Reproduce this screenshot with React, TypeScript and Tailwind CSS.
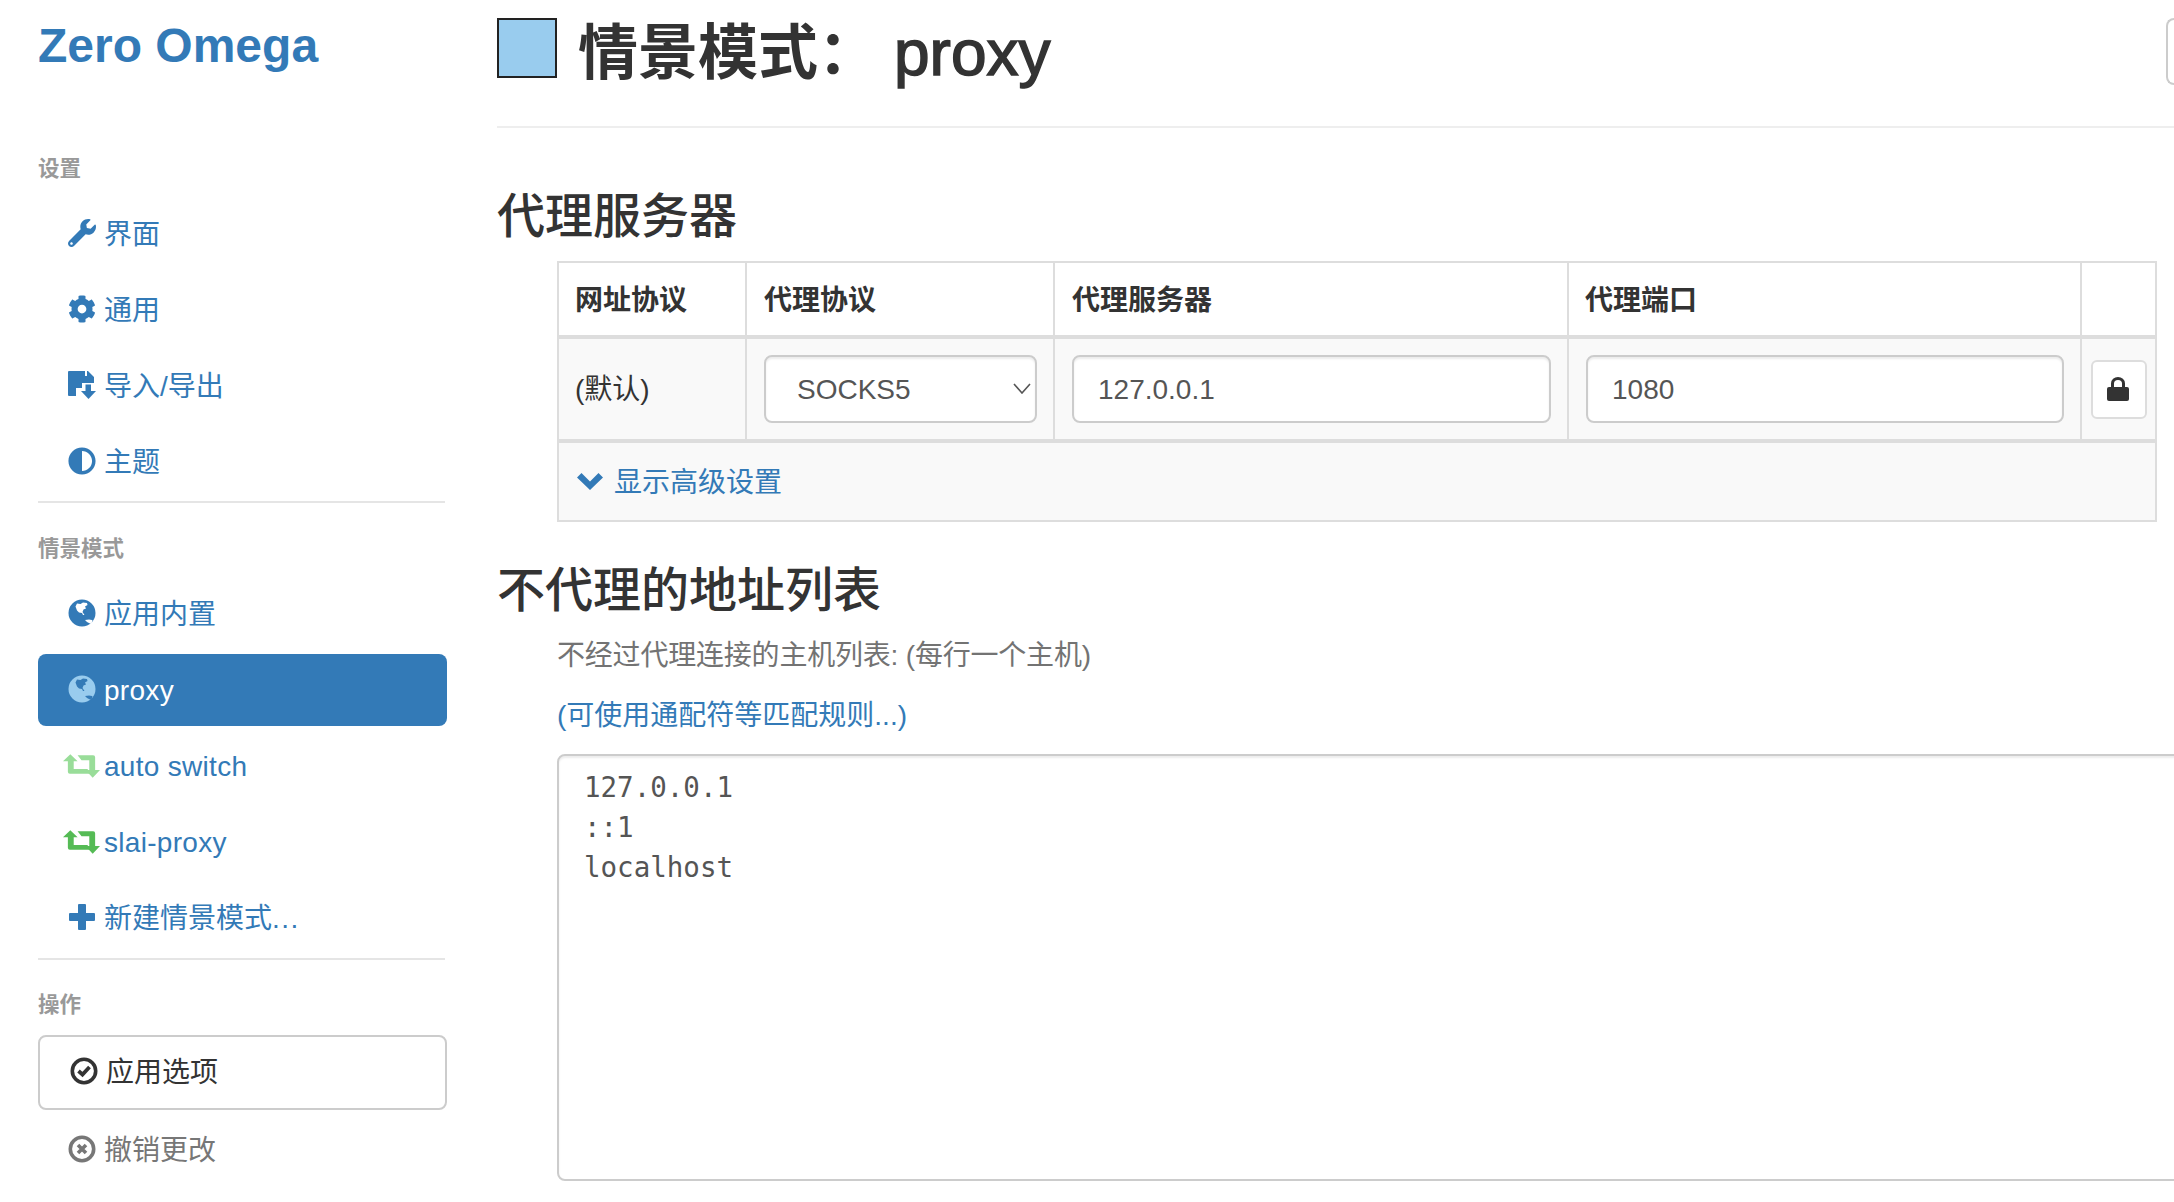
import React from "react";
import { FaWrench, FaCog, FaAdjust } from "react-icons/fa";

const FONT = "font-['Liberation_Sans','Noto_Sans_CJK_SC',sans-serif]";

function Floppy() {
  return (
    <svg viewBox="0 0 28 28" className="h-[28px] w-[28px] fill-current">
      <path d="M1 0H17V5H19V0H20L26 6V12H14V17H8V25H1Q0 25 0 24V1Q0 0 1 0Z" />
      <path d="M17.5 13.5H23V20H28L20.5 28L13 20H17.5Z" />
    </svg>
  );
}

function Globe({ color }: { color?: string }) {
  return (
    <svg viewBox="0 0 28 28" className={`h-[28px] w-[28px] ${color ?? ""}`} fill="currentColor">
      <path
        fillRule="evenodd"
        d="M14 .5a13.5 13.5 0 1 1 0 27a13.5 13.5 0 0 1 0-27ZM9 4.5L7.5 7.5L9 11.5L11 13.5L14 14L15 16L16.5 16L14.5 13L15.5 10.5L18 9.5L17 7.5L19.5 6L19 4L15 3.5L12.5 5ZM17 21L19 23L22 24.5L25 22.5L24 21L21 20.5Z"
      />
    </svg>
  );
}

function Retweet({ color }: { color: string }) {
  return (
    <svg viewBox="0 0 38 24" className={`h-[24px] w-[37px] shrink-0 ${color}`} fill="currentColor">
      <path d="M7.5 0L15 7H11V15H25L29 20H7Q5 20 5 18V7H0Z" />
      <path d="M15 1H31Q33 1 33 3V16H38L30.5 24L23 16H27V6H19Z" />
    </svg>
  );
}

function Plus() {
  return (
    <svg viewBox="0 0 26 26" className="h-[26px] w-[26px] fill-current">
      <path d="M9 1Q9 0 10 0H16Q17 0 17 1V9H25Q26 9 26 10V16Q26 17 25 17H17V25Q17 26 16 26H10Q9 26 9 25V17H1Q0 17 0 16V10Q0 9 1 9H9Z" />
    </svg>
  );
}

function Chevron() {
  return (
    <svg viewBox="0 0 26 18" className="mr-[11px] h-[18px] w-[26px] shrink-0 -translate-y-[2px] fill-current">
      <path d="M0 5.5L4.5 1L13 9.5L21.5 1L26 5.5L13 18Z" />
    </svg>
  );
}

function OkCircle() {
  return (
    <svg viewBox="0 0 28 28" className="h-[28px] w-[28px]" fill="none" stroke="currentColor">
      <circle cx="14" cy="14" r="11.7" strokeWidth="3.6" />
      <path d="M8.5 14L12.5 17.5L19.5 10" strokeWidth="3.8" />
    </svg>
  );
}

function RemoveCircle() {
  return (
    <svg viewBox="0 0 28 28" className="h-[28px] w-[28px]" fill="none" stroke="currentColor">
      <circle cx="14" cy="14" r="11.7" strokeWidth="3.6" />
      <path d="M10 10L18 18M18 10L10 18" strokeWidth="3.6" />
    </svg>
  );
}

function Lock() {
  return (
    <svg viewBox="0 0 22 24" className="h-[24px] w-[22px] fill-[#333]">
      <rect x="0" y="10" width="22" height="14" rx="2" />
      <path d="M5.5 11V6.5a5.5 5 0 0 1 11 0V11" fill="none" stroke="#333" strokeWidth="3" />
    </svg>
  );
}

function NavRow({
  icon,
  text,
  active,
  wide,
  latin,
}: {
  icon: React.ReactNode;
  text: React.ReactNode;
  active?: boolean;
  wide?: boolean;
  latin?: boolean;
}) {
  return (
    <a
      className={`flex h-[72px] items-center rounded-[8px] pl-[30px] pt-[2px] text-[28px] ${
        latin ? "tracking-[0.3px]" : ""
      } ${active ? "bg-[#337ab7] text-white" : "text-[#337ab7]"}`}
    >
      <span
        className={
          wide
            ? "-ml-[5px] -mt-[2px] mr-[4px] flex w-[37px] items-center"
            : "-mt-[4px] mr-[8px] flex w-[28px] items-center justify-center"
        }
      >
        {icon}
      </span>
      {text}
    </a>
  );
}

function SectionLabel({ children, className }: { children: React.ReactNode; className: string }) {
  return <div className={`h-[24px] text-[21.5px] font-bold leading-[26px] text-[#999] ${className}`}>{children}</div>;
}

function Sidebar() {
  return (
    <aside className="ml-[38px] w-[409px] shrink-0">
      <div className="pt-[17px] text-[48px] font-bold leading-[58px] text-[#337ab7]">Zero Omega</div>
      <SectionLabel className="mt-[81px]">设置</SectionLabel>
      <nav className="mt-[18px] flex flex-col gap-[4px]">
        <NavRow icon={<FaWrench size={28} />} text="界面" />
        <NavRow icon={<FaCog size={28} />} text="通用" />
        <NavRow icon={<Floppy />} text="导入/导出" />
        <NavRow icon={<FaAdjust size={28} />} text="主题" />
      </nav>
      <div className="mt-[3px] h-[2px] w-[407px] bg-[#e5e5e5]" />
      <SectionLabel className="mt-[33px]">情景模式</SectionLabel>
      <nav className="mt-[18px] flex flex-col gap-[4px]">
        <NavRow icon={<Globe />} text="应用内置" />
        <NavRow icon={<Globe color="text-[#99ccee]" />} text="proxy" active latin />
        <NavRow icon={<Retweet color="text-[#99dd99]" />} text="auto switch" wide latin />
        <NavRow icon={<Retweet color="text-[#55bb55]" />} text="slai-proxy" wide latin />
        <NavRow
          icon={<Plus />}
          text={
            <>
              新建情景模式<span className="tracking-[1.5px]">...</span>
            </>
          }
        />
      </nav>
      <div className="mt-[4px] h-[2px] w-[407px] bg-[#e5e5e5]" />
      <SectionLabel className="mt-[32px]">操作</SectionLabel>
      <button className="mt-[19px] flex h-[75px] w-full items-center rounded-[8px] border-2 border-[#ccc] bg-white pl-[30px] text-[28px] text-[#333]">
        <span className="-mt-[4px] mr-[8px] flex w-[28px]">
          <OkCircle />
        </span>
        应用选项
      </button>
      <div className="mt-[4px] flex h-[72px] items-center pl-[30px] pt-[2px] text-[28px] text-[#777]">
        <span className="-mt-[4px] mr-[8px] flex w-[28px]">
          <RemoveCircle />
        </span>
        撤销更改
      </div>
    </aside>
  );
}

const thClass = "h-[76px] border-b-4 border-r-2 border-[#ddd] pl-[17px] pr-[16px] pt-[3px] text-left text-[28px] font-bold text-[#333]";
const tdClass = "h-[104px] border-b-4 border-r-2 border-[#ddd] bg-[#f9f9f9] pl-[17px] pr-[16px] text-[28px] text-[#333]";
const inputClass =
  "h-[68px] w-full rounded-[8px] border-2 border-[#ccc] bg-white pl-[24px] pt-[1px] text-[28px] text-[#555] shadow-[inset_0_2px_2px_rgba(0,0,0,0.075)] outline-none";

function ProxyTable() {
  return (
    <table className="ml-[60px] mt-[15px] w-[1600px] table-fixed border-separate border-spacing-0 border-2 border-[#ddd]">
      <colgroup>
        <col className="w-[188px]" />
        <col className="w-[308px]" />
        <col className="w-[514px]" />
        <col className="w-[513px]" />
        <col className="w-[73px]" />
      </colgroup>
      <thead>
        <tr>
          <th className={`${thClass} !pl-[16px]`}>网址协议</th>
          <th className={thClass}>代理协议</th>
          <th className={thClass}>代理服务器</th>
          <th className={`${thClass} !pl-[16px]`}>代理端口</th>
          <th className="h-[76px] border-b-4 border-[#ddd]" />
        </tr>
      </thead>
      <tbody>
        <tr>
          <td className={`${tdClass} !pl-[16px] pt-[2px]`}>(默认)</td>
          <td className={tdClass}>
            <div className="relative">
              <select className={`${inputClass} appearance-none !pl-[31px]`} defaultValue="SOCKS5">
                <option>SOCKS5</option>
              </select>
              <svg
                viewBox="0 0 18 11"
                className="pointer-events-none absolute right-[6px] top-[28px] h-[11px] w-[18px]"
                fill="none"
                stroke="#555"
                strokeWidth="1.6"
              >
                <path d="M1 1L9 10L17 1" />
              </svg>
            </div>
          </td>
          <td className={tdClass}>
            <input className={inputClass} defaultValue="127.0.0.1" />
          </td>
          <td className={tdClass}>
            <input className={inputClass} defaultValue="1080" />
          </td>
          <td className="h-[104px] border-b-4 border-[#ddd] bg-[#f9f9f9] pl-[9px]">
            <button className="flex h-[59px] w-[56px] items-center justify-center rounded-[6px] border-2 border-[#ddd] bg-white pr-[3px]">
              <Lock />
            </button>
          </td>
        </tr>
        <tr>
          <td colSpan={5} className="h-[77px] bg-[#f9f9f9] pl-[18px] pt-[3px] text-[28px] text-[#337ab7]">
            <span className="flex items-center">
              <Chevron />
              显示高级设置
            </span>
          </td>
        </tr>
      </tbody>
    </table>
  );
}

export default function App() {
  return (
    <div className={`flex h-[1202px] w-[2174px] overflow-hidden bg-white ${FONT} text-[#333]`}>
      <Sidebar />
      <main className="ml-[50px] min-w-0 flex-1">
        <header className="flex h-[128px] items-start border-b-2 border-[#eee] pt-[18px]">
          <div className="h-[60px] w-[60px] shrink-0 border-2 border-[#222] bg-[#99ccee]" />
          <h1 className="ml-[21px] text-[60px] font-semibold leading-[68px] text-[#333]">
            情景模式：
            <span className="relative top-[1px] ml-[16px] text-[64px] font-normal [-webkit-text-stroke:1.5px_#333]">proxy</span>
          </h1>
          <div className="ml-auto h-[67px] w-[8px] rounded-l-[8px] border-y-2 border-l-2 border-[#ccc]" />
        </header>
        <h2 className="mt-[60px] text-[48px] font-medium leading-[58px]">代理服务器</h2>
        <ProxyTable />
        <h2 className="mt-[40px] text-[48px] font-medium leading-[58px]">不代理的地址列表</h2>
        <p className="ml-[60px] mt-[16px] text-[28px] leading-[40px] tracking-[-0.2px] text-[#737373]">
          不经过代理连接的主机列表: (每行一个主机)
        </p>
        <a className="ml-[60px] mt-[20px] block text-[28px] leading-[40px] text-[#337ab7]">(可使用通配符等匹配规则...)</a>
        <textarea
          readOnly
          className="ml-[60px] mt-[18px] block h-[427px] w-[1700px] resize-none rounded-[8px] border-2 border-[#ccc] bg-white px-[25px] py-[11px] font-['DejaVu_Sans_Mono',monospace] text-[27.5px] leading-[40px] text-[#555] shadow-[inset_0_2px_2px_rgba(0,0,0,0.075)] outline-none"
          defaultValue={"127.0.0.1\n::1\nlocalhost"}
        />
      </main>
    </div>
  );
}
